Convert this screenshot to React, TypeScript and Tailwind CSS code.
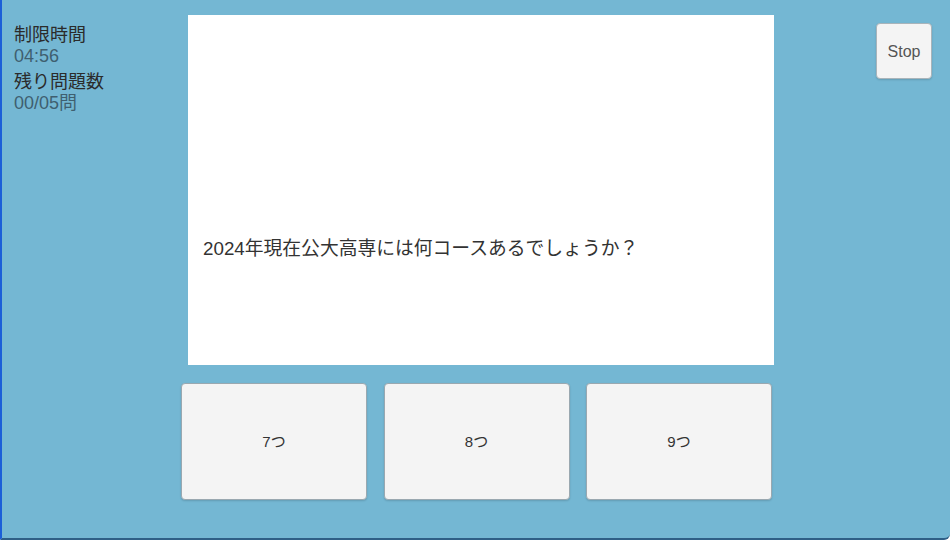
const choices = ["7つ", "8つ", "9つ"];

export default function App() {
  return (
    <div
      className="flex w-[950px] h-[540px] bg-[#74b7d3] border-l-2 border-l-[#1b5fd8] border-b-2 border-b-[#2f5f86] rounded-br-md overflow-hidden"
      style={{ fontFamily: '"Liberation Sans", "Noto Sans CJK JP", sans-serif' }}
    >
      <div className="w-[179px] shrink-0 pl-[12px] pt-[25px]">
        <div className="text-[18px] leading-[21px] text-[#2b2b2b]">制限時間</div>
        <div className="text-[18px] leading-[20px] text-[#3f5f70]">04:56</div>
        <div className="mt-[6px] text-[18px] leading-[21px] text-[#2b2b2b]">残り問題数</div>
        <div className="text-[18px] leading-[20px] text-[#3f5f70]">00/05問</div>
      </div>

      <div className="w-[592px] shrink-0 flex flex-col pt-[15px]">
        <div className="ml-[7px] w-[586px] h-[350px] bg-white px-[15px] pt-[222px]">
          <p className="text-[18.8px] leading-[24px] text-[#333]">
            2024年現在公大高専には何コースあるでしょうか？
          </p>
        </div>
        <div className="mt-[18px] flex gap-[16.5px]">
          {choices.map((c) => (
            <button
              key={c}
              className="w-[186px] h-[117px] pt-[2px] bg-[#f4f4f4] border border-[#9aa8b0] rounded-[4px] shadow-[0_1px_2px_rgba(0,0,0,0.15)] text-[15px] text-[#333]"
            >
              {c}
            </button>
          ))}
        </div>
      </div>

      <div className="flex-1 pl-[103px] pt-[23px]">
        <button className="w-[56px] h-[56px] pt-[1px] bg-[#f4f4f4] border border-[#a9b4ba] rounded-[4px] shadow-[0_1px_2px_rgba(0,0,0,0.15)] text-[16px] text-[#555]">
          Stop
        </button>
      </div>
    </div>
  );
}
